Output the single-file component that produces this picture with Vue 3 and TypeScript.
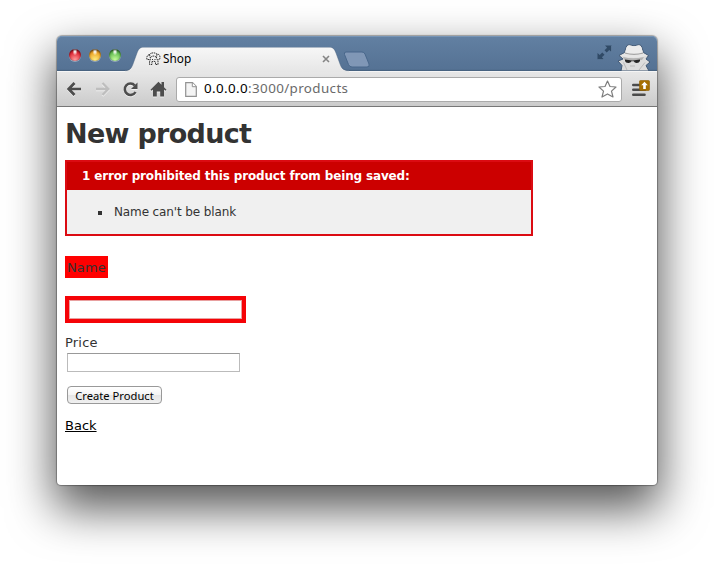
<script setup lang="ts">
import { ref } from 'vue'

const errors: string[] = ["Name can't be blank"]
const lights: string[] = ['red', 'amber', 'green']
const name = ref('')
const price = ref('')
</script>

<template>
  <main class="desktop">
    <div class="window">
      <header class="titlebar">
        <div class="lights">
          <span v-for="light in lights" :key="light" class="light" :class="light"></span>
        </div>
        <div class="tab">
          <svg class="tab-shape" width="232" height="25" viewBox="0 0 232 25">
            <defs>
              <linearGradient id="tabFill" x1="0" y1="0" x2="0" y2="1">
                <stop offset="0" stop-color="#f7f7f7" />
                <stop offset="1" stop-color="#e6e6e6" />
              </linearGradient>
            </defs>
            <path d="M4 25V23.800C9 23.800 10.500 21 12 17L16 6C17.500 2 19 .2 23 .2H208C212 .2 213.500 2 215 6L219 17C220.500 21 222 23.800 228 23.800V25Z" fill="url(#tabFill)" />
            <path d="M4 23.500C9 23.500 10.500 21 12 17L16 6C17.500 2 19 .1 23 .1H208C212 .1 213.500 2 215 6L219 17C220.500 21 222 23.500 228 23.500" fill="none" stroke="#455e7b" stroke-opacity=".55" stroke-width=".8" />
          </svg>
          <svg class="favicon" width="15" height="14" viewBox="0 0 15 14" fill="none" stroke="#333" stroke-width="1" stroke-dasharray="1.6 .7">
            <path d="M3.500 2.500C5 .5 9 .2 11 2.200C14 2 14.500 5 13.600 7.300L11.800 8M3.500 2.500C1 3 .3 5.500 1 7.500L3.500 7.500M3.500 2.500L4.500 6.500L3.500 10V12.500H6V10.500M11 2.200L10.400 6L12 9V12.500H9.500V10.500M4.500 5.500C6 3.500 9 3.500 10.400 5.500M6 7.500H7M8.500 7.500H9.500M5.500 10C7 9 8.500 9 10 10" />
          </svg>
          <span class="tab-title">Shop</span>
          <svg class="tab-close" width="8" height="8" viewBox="0 0 8 8">
            <path d="M1 1L7 7M7 1L1 7" stroke="#858585" stroke-width="1.600" />
          </svg>
        </div>
        <svg class="new-tab" width="28" height="17" viewBox="0 0 28 17">
          <path d="M3 1H19Q21 1 22 3L26 13Q27 16 24 16H9Q6.500 16 5.500 13.500L1.500 3.500Q.8 1 3 1Z" fill="#8097b6" stroke="#48678b" stroke-width="1" />
        </svg>
        <svg class="expand" width="15" height="15" viewBox="0 0 15 15">
          <path d="M8 .5H14.500V7L12.300 4.900L9.700 7.500L7.500 5.300L10.100 2.700ZM7 14.500H.5V8L2.700 10.100L5.300 7.500L7.500 9.700L4.900 12.300Z" fill="#304a66" />
          <path d="M.5 15H7M14.900 1V7" stroke="#809cba" stroke-width=".6" />
        </svg>
        <svg class="incognito" width="34" height="27" viewBox="0 0 34 27">
          <path d="M9 3.500Q9.500 .8 12 .8L17 1.800L22 .8Q24.500 .8 25 3.500L26.500 8.500L31.500 11.500L29 15L33 18L29 21.500L32 27H4L5 21.500L1 17L6 15L2 11.500L7.500 8.500Z" fill="#dcdcdc" stroke="#405875" stroke-width="1" />
          <path d="M9.300 4Q10 1.300 12 1.300L17 2.300L22 1.300Q24 1.300 24.700 4L26 9Q17 11.500 8 9Z" fill="#ececec" />
          <path d="M8 8.500Q17 11 26 8.500V9.700Q17 12.200 8 9.700Z" fill="#a4a4a4" />
          <path d="M3 11.500L8 9.700Q17 12.200 26 9.700L30.500 11.500Q17 16 3 11.500Z" fill="#e6e6e6" />
          <path d="M6 13Q16 15.500 27 13L25 16Q16 16.500 7 15.800Z" fill="#b2b2b2" />
          <path d="M8 15.600L15.500 16.500L23 15.600V17Q22 19.300 19.500 19.100Q17.500 19 16.800 17.300H14.500Q13.500 19.200 11.300 19.100Q8.500 19 8 17Z" fill="#252525" />
          <path d="M6.500 18.500L10 26M28 18.500L22 26M13 22H18" stroke="#b5b5b5" stroke-width=".9" />
        </svg>
      </header>

      <nav class="toolbar">
        <svg class="nav-icon back-icon" width="15" height="14" viewBox="0 0 15 14">
          <path d="M7.500 1L1.700 7L7.500 13M2 7H14" fill="none" stroke="#4d4d4d" stroke-width="2.700" />
        </svg>
        <svg class="nav-icon forward-icon" width="15" height="14" viewBox="0 0 15 14">
          <path d="M7.500 1L13.300 7L7.500 13M13 7H1" fill="none" stroke="#bebebe" stroke-width="2.300" />
        </svg>
        <svg class="nav-icon reload-icon" width="15" height="15" viewBox="0 0 15 15">
          <path d="M11.800 3.500A5.700 5.700 0 1 0 12.500 10" fill="none" stroke="#4d4d4d" stroke-width="2.500" />
          <path d="M14.500 .5V7H8Z" fill="#4d4d4d" />
        </svg>
        <svg class="nav-icon home-icon" width="17" height="16" viewBox="0 0 17 16">
          <path d="M8.500 .7L11.500 3.700V1H14V6.200L16.500 8.800L15.300 9.800L14 8.500V15.500H10.200V10.500H6.800V15.500H3V8.500L1.700 9.800L.5 8.700Z" fill="#4d4d4d" />
        </svg>
        <div class="address">
          <svg class="page-icon" width="12" height="15" viewBox="0 0 12 15">
            <path d="M.7 .7H7.500L11.300 4.500V14.300H.7Z" fill="#f4f4f4" stroke="#929292" stroke-width="1.200" />
            <path d="M7.300 .7V4.700H11.300" fill="#fff" stroke="#929292" />
          </svg>
          <span class="url"><b>0.0.0.0</b>:3000/products</span>
          <svg class="star" width="19" height="18" viewBox="0 0 19 18">
            <path d="M9.500 1L12 6.500L18 7L13.500 11.100L15 17L9.500 13.900L4 17L5.500 11.100L1 7L7 6.500Z" fill="#fff" stroke="#7d7d7d" stroke-width="1.200" stroke-linejoin="round" />
          </svg>
        </div>
        <svg class="menu" width="19" height="18" viewBox="0 0 19 18">
          <path d="M2.300 5H13M2.300 9.800H14M2.300 14.700H13.500" stroke="#4b4b4b" stroke-width="2.600" stroke-linecap="round" />
          <rect x="8.500" y=".5" width="10" height="10" rx="1" fill="#a66f00" stroke="#926000" stroke-width=".6" />
          <path d="M13.500 1.800L16.800 5.300H14.800V9H12.200V5.300H10.200Z" fill="#fff" />
        </svg>
      </nav>

      <section class="page">
        <h1>New product</h1>
        <div class="errors">
          <h2>1 error prohibited this product from being saved:</h2>
          <ul>
            <li v-for="error in errors" :key="error"><span>{{ error }}</span></li>
          </ul>
        </div>
        <form @submit.prevent>
          <label class="name-label" for="product-name">Name</label>
          <div class="invalid"><input id="product-name" v-model="name" type="text" /></div>
          <label class="price-label" for="product-price">Price</label>
          <input id="product-price" v-model="price" class="price-input" type="text" />
          <button type="submit">Create Product</button>
        </form>
        <a class="back-link" href="#">Back</a>
      </section>
    </div>
  </main>
</template>

<style>
body {
  margin: 0;
  background: #fff;
  overflow: hidden;
}
</style>

<style scoped>
* {
  box-sizing: border-box;
}
.desktop {
  width: 714px;
  height: 564px;
  padding: 36px 57px 79px;
  overflow: hidden;
  background: #fff;
}
.window {
  display: flex;
  flex-direction: column;
  width: 600px;
  height: 449px;
  border-radius: 5px 5px 4px 4px;
  background: #fff;
  box-shadow: 0 0 1px 1px rgba(0, 0, 0, 0.3), 0 21px 46px 3px rgba(0, 0, 0, 0.66);
}
.titlebar {
  display: flex;
  align-items: flex-start;
  height: 36px;
  border-radius: 5px 5px 0 0;
  border-bottom: 1px solid #f5f5f5;
  background: linear-gradient(#6280a2, #557294 95%, #435d79);
  box-shadow: inset 0 1px #7795b6;
}
.lights {
  display: flex;
  gap: 8px;
  padding: 13px 0 0 12px;
}
.light {
  width: 12px;
  height: 12px;
  border-radius: 50%;
  box-shadow: inset 0 1px 2px rgba(0, 0, 0, 0.65), 0 1px rgba(255, 255, 255, 0.35);
}
.red {
  background: radial-gradient(ellipse at 50% 20%, #fff 5%, transparent 30%), radial-gradient(circle at 50% 90%, #ff9d9d, #df2836 60%, #9c101c);
}
.amber {
  background: radial-gradient(ellipse at 50% 20%, #fff 5%, transparent 30%), radial-gradient(circle at 50% 90%, #ffef82, #eda527 60%, #9c5a10);
}
.green {
  background: radial-gradient(ellipse at 50% 20%, #fff 5%, transparent 30%), radial-gradient(circle at 50% 90%, #c8ff9d, #65bd54 60%, #32782a);
}
.tab {
  position: relative;
  display: flex;
  align-items: center;
  width: 218px;
  height: 25px;
  margin: 11px 0 0 6px;
  padding: 0 0 2px 19px;
  font: 11.800px "Noto Sans", sans-serif;
  color: #000;
}
.tab-shape {
  position: absolute;
  left: -6px;
  top: 0;
}
.favicon,
.tab-title,
.tab-close {
  position: relative;
}
.tab-title {
  width: 159px;
  margin-left: 2px;
  line-height: 23px;
}
.new-tab {
  position: relative;
  margin: 15px 0 0 -2px;
}
.expand {
  margin: 9px 0 0 auto;
}
.incognito {
  margin: 8px 6px 0 5px;
}
.toolbar {
  display: flex;
  align-items: center;
  height: 35px;
  padding: 0 7px 0 10px;
  border-bottom: 1px solid #777;
  background: linear-gradient(#e7e7e7, #cbcbcb);
}
.nav-icon {
  flex: none;
  filter: drop-shadow(0 1px 0 rgba(255, 255, 255, 0.6));
}
.forward-icon {
  margin-left: 13px;
}
.reload-icon {
  margin-left: 13px;
}
.home-icon {
  margin-left: 12px;
}
.address {
  display: flex;
  align-items: center;
  width: 446px;
  height: 25px;
  margin-left: 9px;
  padding: 0 4px 0 8px;
  border: 1px solid #aaa;
  border-radius: 3px;
  background: #fff;
}
.url {
  margin: -2px 0 0 7px;
  font: 13.400px/22px "Noto Sans", sans-serif;
  letter-spacing: 0.38px;
  color: #6a6a6a;
}
.url b {
  font-weight: 400;
  color: #000;
}
.star {
  margin-left: auto;
}
.menu {
  margin: -1px 0 0 auto;
}
.page {
  flex: 1;
  padding: 8px;
  color: #333;
  font: 13px/18px "DejaVu Sans", Verdana, sans-serif;
}
h1 {
  margin: 0;
  height: 45px;
  font-size: 27px;
  line-height: 37px;
  letter-spacing: -0.700px;
  white-space: nowrap;
}
.errors {
  width: 468px;
  height: 76px;
  border: 2px solid #db0b12;
  background: #f0f0f0;
}
h2 {
  height: 28px;
  margin: 0;
  padding-left: 15px;
  background: #c00;
  color: #fff;
  font-size: 12px;
  line-height: 28px;
  letter-spacing: -0.150px;
  white-space: nowrap;
}
ul {
  margin: 0;
  padding: 13px 0 0 47px;
  list-style: none;
  font-size: 12px;
  line-height: 18px;
  letter-spacing: -0.120px;
}
li {
  display: flex;
  align-items: center;
}
li::before {
  content: "";
  width: 4px;
  height: 4px;
  margin: 1px 12px 0 -16px;
  background: #333;
}
form {
  display: flex;
  flex-direction: column;
  align-items: flex-start;
  padding-top: 20px;
}
.name-label {
  width: 43px;
  height: 22px;
  padding-left: 2px;
  background: #f00;
  line-height: 23px;
  letter-spacing: 0.150px;
}
.invalid {
  display: flex;
  width: 181px;
  height: 27px;
  margin-top: 18px;
  padding: 4px;
  background: #f50307;
}
input {
  width: 173px;
  height: 19px;
  margin: 0;
  padding: 1px;
  border: 1px solid #bbb;
  border-top-color: #999;
  border-radius: 0;
  outline: 0;
  background: #fff;
}
.invalid input {
  border-color: #e8a0a0;
}
.price-label {
  margin-top: 10px;
  line-height: 20px;
  letter-spacing: 0.200px;
}
.price-input {
  margin-left: 2px;
}
button {
  width: 95px;
  height: 18px;
  margin: 14px 0 0 2px;
  padding: 0;
  border: 1px solid #999;
  border-radius: 4px;
  background: linear-gradient(#fff, #f4f4f4 50%, #e6e6e6 51%, #f0f0f0);
  color: #000;
  font: 11.200px/15px "Noto Sans", sans-serif;
  white-space: nowrap;
}
.back-link {
  display: inline-block;
  margin-top: 13px;
  color: #000;
  text-decoration: underline;
}
</style>
